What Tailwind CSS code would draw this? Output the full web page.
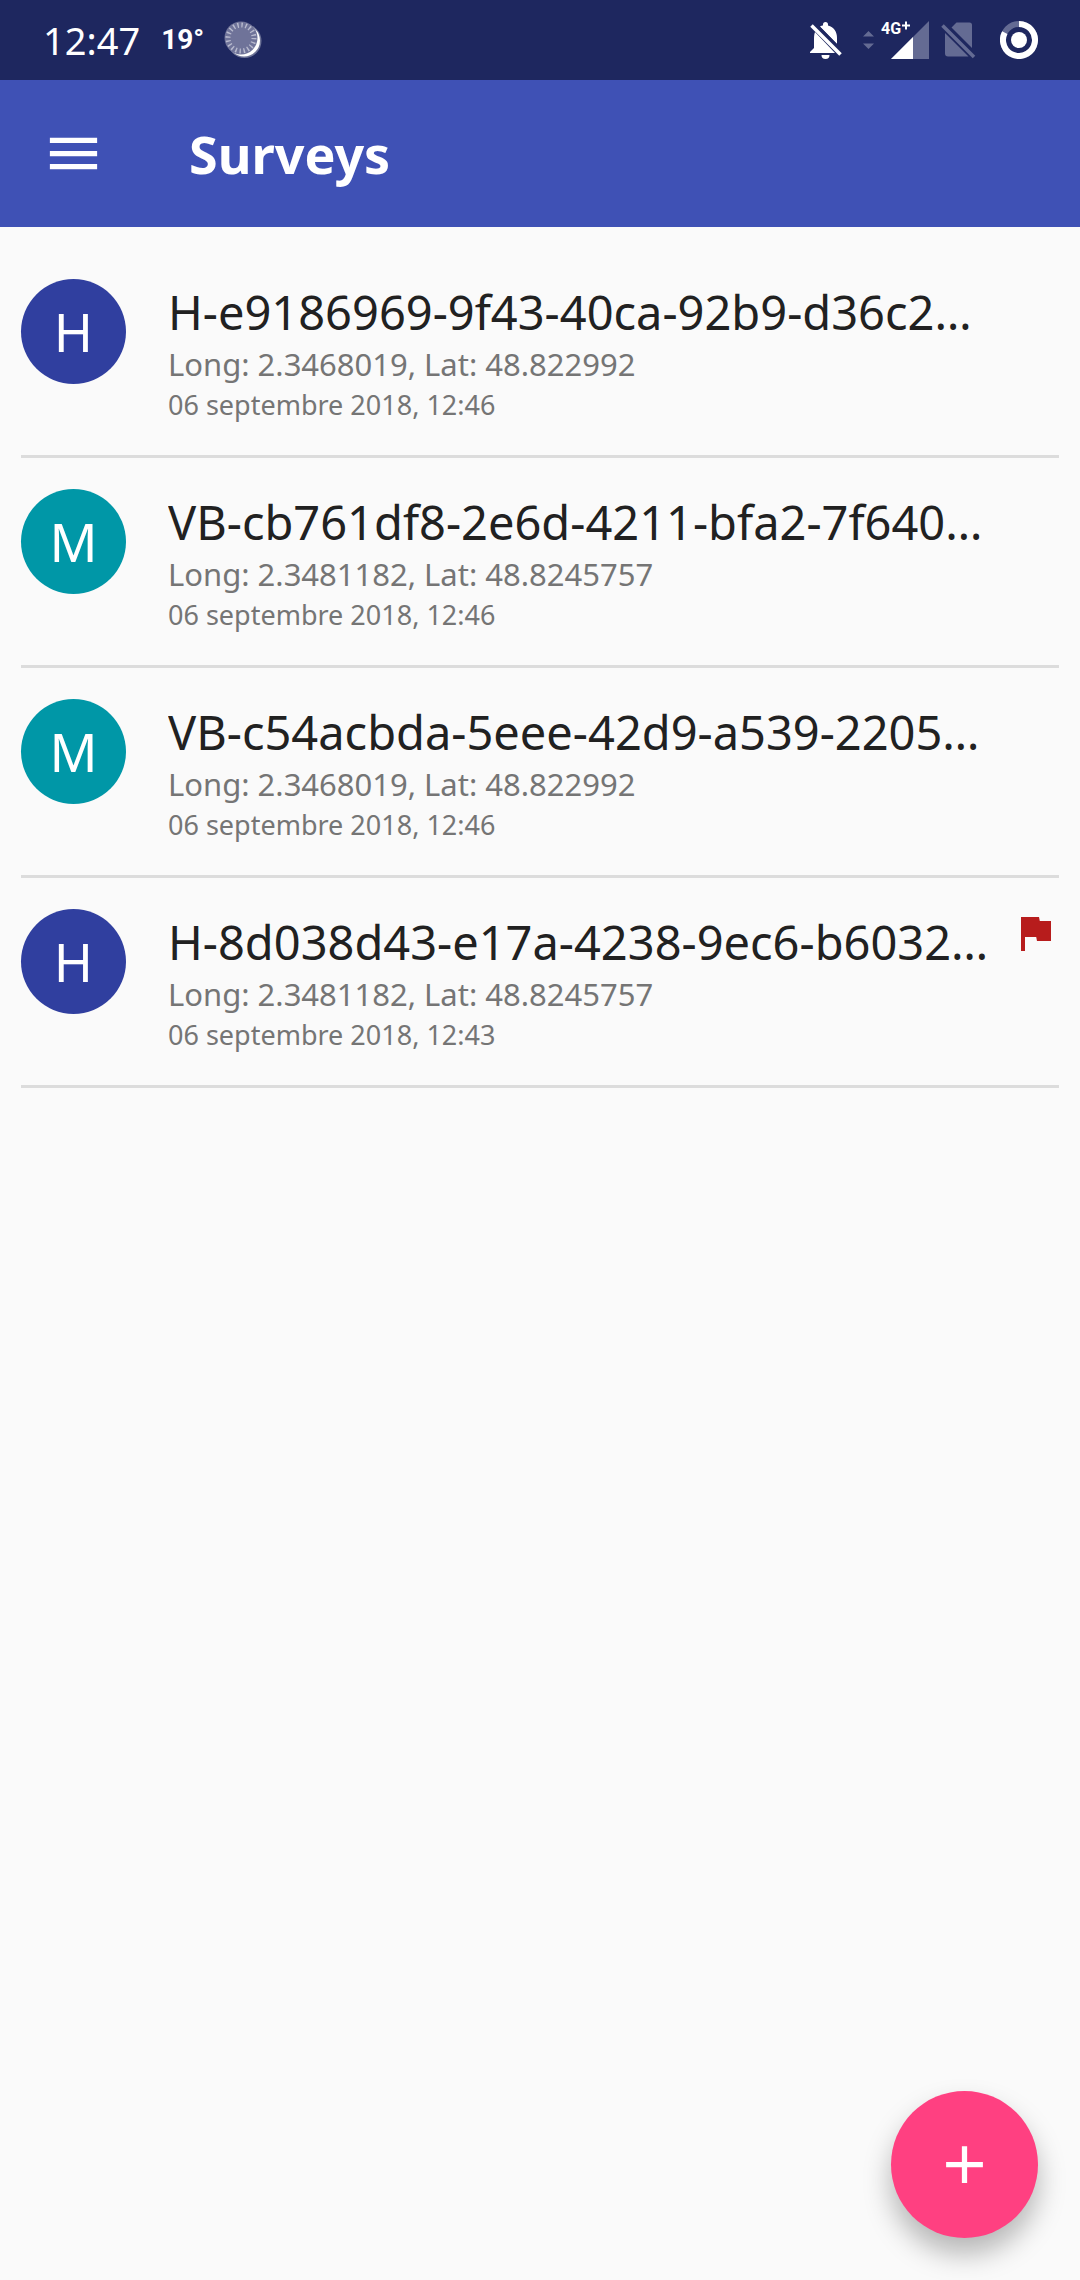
<!DOCTYPE html>
<html lang="fr">
<head>
<meta charset="utf-8">
<meta name="viewport" content="width=device-width, initial-scale=1">
<title>Surveys</title>
<script src="https://cdn.jsdelivr.net/npm/@tailwindcss/browser@4"></script>
</head>
<body class="min-h-screen bg-[#fafafa] font-['Noto_Sans',sans-serif] text-[#212121]">

<!-- System status bar -->
<div class="flex h-20 items-center justify-between bg-[#1e275f] pr-[42px] pl-[43px] text-white">
  <div class="flex items-center">
    <span class="text-[38px] leading-[50px]">12:47</span>
    <span class="ml-[21px] font-['Roboto',sans-serif] text-[28px] leading-[36px] font-bold">19°</span>
    <svg class="ml-[18px] size-10" viewBox="0 0 40 40" role="img" aria-label="Weather">
      <circle cx="22.500" cy="21" r="17" fill="#fff" opacity=".35"/>
      <circle cx="22" cy="20.500" r="16" fill="#fff"/>
      <circle cx="19" cy="18" r="16.500" fill="#6f7399"/>
      <circle cx="19" cy="18" r="13" fill="none" stroke="#b9bbcf" stroke-width="5" stroke-dasharray="1.400 2.684"/>
    </svg>
  </div>
  <div class="flex items-center">
    <svg class="h-[38px] w-8" viewBox="0 0 32 38" fill="#fff" role="img" aria-label="Notifications muted">
      <path d="M5 11 C4 14 4 16 4 19V27L0 31V32H25Z"/>
      <path d="M10 5.500 C11.500 4.700 12 4.500 13 4.500V3.500a2.500 2.500 0 0 1 5 0V4.500C24 6 27 11 27 17V23Z"/>
      <path d="M11.500 34h8a4 4 0 0 1-8 0z"/>
      <path d="M4.500 2.500L32 30" stroke="#1e275f" stroke-width="3"/>
      <path d="M1.500 4.500L30.500 33.500" stroke="#fff" stroke-width="3.500"/>
    </svg>
    <svg class="ml-[21px] h-5 w-3" viewBox="0 0 12 20" fill="#646b93" aria-hidden="true">
      <path d="M0 6.500L5.500 1 11 6.500zM0 13.500h11L5.500 19z"/>
    </svg>
    <svg class="ml-1.5 h-[38px] w-12 overflow-visible" viewBox="0 0 48 38" role="img" aria-label="4G+ signal">
      <path d="M48 0V38H10z" fill="#646b93"/>
      <path d="M32 16V38H10z" fill="#fff"/>
      <text x="0" y="13" fill="#fff" font-family="Roboto, sans-serif" font-weight="700" font-size="16">4G</text>
      <path d="M21 4.500h8M25 .5v8" stroke="#fff" stroke-width="2"/>
    </svg>
    <svg class="ml-3 h-[38px] w-[35px]" viewBox="0 0 35 38" fill="#646b93" role="img" aria-label="No SIM">
      <path d="M10.500 6.500L15.500 1.500H28.500a2.500 2.500 0 0 1 2.500 2.500V27zM4 12L27.500 35.500H7a3 3 0 0 1-3-3z"/>
      <path d="M1.500 4.500L33 36" stroke="#646b93" stroke-width="3.500"/>
    </svg>
    <svg class="ml-6 size-[38px]" viewBox="0 0 38 38" fill="none" role="img" aria-label="Battery">
      <circle cx="19" cy="19" r="16" stroke="#646b93" stroke-width="6"/>
      <path d="M19 3A16 16 0 1 1 4.800 11.600" stroke="#fff" stroke-width="6"/>
      <circle cx="19" cy="19" r="8" fill="#fff"/>
    </svg>
  </div>
</div>

<!-- App bar -->
<header class="flex h-[147px] items-center bg-[#3f51b5] px-[42px] text-white">
  <button type="button" aria-label="Open menu" class="flex size-[63px] items-center justify-center">
    <svg class="size-[63px]" viewBox="0 0 24 24" fill="currentColor"><path d="M3 18h18v-2H3v2zm0-5h18v-2H3v2zm0-7v2h18V6H3z"/></svg>
  </button>
  <h1 class="ml-[84px] text-[52px] leading-[72px] font-bold">Surveys</h1>
</header>

<!-- Survey list -->
<main class="px-[21px] pt-[21px]">
  <ul>
    <li class="flex h-[210px] items-start border-b-[3px] border-[#dcdcdc] pt-[31px]">
      <span class="flex size-[105px] shrink-0 items-center justify-center rounded-full bg-[#303f9f] text-[53px] leading-[72px] text-white">H</span>
      <div class="ml-[42px] min-w-0 flex-1 text-[#757575]">
        <h2 class="truncate text-[47px] leading-[66px] text-[#212121]">H-e9186969-9f43-40ca-92b9-d36c2…</h2>
        <p class="text-[31px] leading-[38px]">Long: 2.3468019, Lat: 48.822992</p>
        <p class="text-[27px] leading-[44px]">06 septembre 2018, 12:46</p>
      </div>
    </li>
    <li class="flex h-[210px] items-start border-b-[3px] border-[#dcdcdc] pt-[31px]">
      <span class="flex size-[105px] shrink-0 items-center justify-center rounded-full bg-[#0097a7] text-[53px] leading-[72px] text-white">M</span>
      <div class="ml-[42px] min-w-0 flex-1 text-[#757575]">
        <h2 class="truncate text-[47px] leading-[66px] text-[#212121]">VB-cb761df8-2e6d-4211-bfa2-7f640…</h2>
        <p class="text-[31px] leading-[38px]">Long: 2.3481182, Lat: 48.8245757</p>
        <p class="text-[27px] leading-[44px]">06 septembre 2018, 12:46</p>
      </div>
    </li>
    <li class="flex h-[210px] items-start border-b-[3px] border-[#dcdcdc] pt-[31px]">
      <span class="flex size-[105px] shrink-0 items-center justify-center rounded-full bg-[#0097a7] text-[53px] leading-[72px] text-white">M</span>
      <div class="ml-[42px] min-w-0 flex-1 text-[#757575]">
        <h2 class="truncate text-[47px] leading-[66px] text-[#212121]">VB-c54acbda-5eee-42d9-a539-2205…</h2>
        <p class="text-[31px] leading-[38px]">Long: 2.3468019, Lat: 48.822992</p>
        <p class="text-[27px] leading-[44px]">06 septembre 2018, 12:46</p>
      </div>
    </li>
    <li class="flex h-[210px] items-start border-b-[3px] border-[#dcdcdc] pt-[31px]">
      <span class="flex size-[105px] shrink-0 items-center justify-center rounded-full bg-[#303f9f] text-[53px] leading-[72px] text-white">H</span>
      <div class="ml-[42px] min-w-0 flex-1 text-[#757575]">
        <h2 class="truncate text-[47px] leading-[66px] text-[#212121]">H-8d038d43-e17a-4238-9ec6-b6032…</h2>
        <p class="text-[31px] leading-[38px]">Long: 2.3481182, Lat: 48.8245757</p>
        <p class="text-[27px] leading-[44px]">06 septembre 2018, 12:43</p>
      </div>
      <svg class="size-12 shrink-0" viewBox="0 0 24 24" fill="#b71c1c" role="img" aria-label="Flagged"><path d="M14.400 6L14 4H5v17h2v-7h5.600l.400 2h7V6z"/></svg>
    </li>
  </ul>
</main>

<button type="button" aria-label="Add survey" class="fixed right-[42px] bottom-[42px] flex size-[147px] items-center justify-center rounded-full bg-[#ff4081] text-white shadow-[0_16px_28px_rgba(0,0,0,0.28)]">
  <svg class="size-[63px]" viewBox="0 0 24 24" fill="currentColor"><path d="M19 13h-6v6h-2v-6H5v-2h6V5h2v6h6v2z"/></svg>
</button>
</body>
</html>
